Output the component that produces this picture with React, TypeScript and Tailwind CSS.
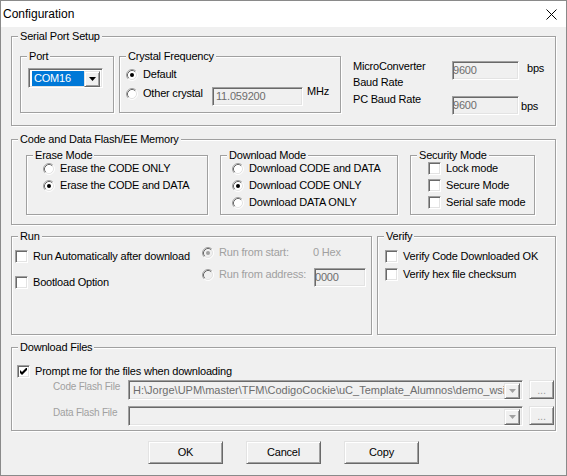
import React from "react";

const SUNKEN =
  "border border-t-[#a0a0a0] border-l-[#a0a0a0] border-b-white border-r-white shadow-[inset_1px_1px_0_#696969,inset_-1px_-1px_0_#e3e3e3]";
const RAISED =
  "border border-t-[#e3e3e3] border-l-[#e3e3e3] border-b-[#696969] border-r-[#696969] shadow-[inset_1px_1px_0_#fff,inset_-1px_-1px_0_#a0a0a0]";

function Group({
  label,
  className,
  children,
}: {
  label: string;
  className: string;
  children?: React.ReactNode;
}) {
  return (
    <div
      className={`relative border border-[#a0a0a0] shadow-[inset_1px_1px_0_#fff,1px_1px_0_#fff] ${className}`}
    >
      <span className="absolute left-[6px] -top-[7px] px-[2px] bg-[#f0f0f0] leading-[13px] whitespace-nowrap">
        {label}
      </span>
      {children}
    </div>
  );
}

function RadioIcon({ checked, disabled }: { checked?: boolean; disabled?: boolean }) {
  return (
    <svg width="12" height="12" viewBox="0 0 12 12" className="shrink-0">
      <circle cx="6" cy="6" r="5" fill={disabled ? "#f0f0f0" : "#ffffff"} />
      <path d="M9.89 2.11 A5.5 5.5 0 0 0 2.11 9.89" fill="none" stroke="#a0a0a0" />
      <path d="M2.11 9.89 A5.5 5.5 0 0 0 9.89 2.11" fill="none" stroke="#ffffff" />
      <path d="M9.18 2.82 A4.5 4.5 0 0 0 2.82 9.18" fill="none" stroke="#696969" />
      <path d="M2.82 9.18 A4.5 4.5 0 0 0 9.18 2.82" fill="none" stroke="#e3e3e3" />
      {checked && <circle cx="6" cy="6" r="2" fill={disabled ? "#a0a0a0" : "#000000"} />}
    </svg>
  );
}

function Radio({
  label,
  checked,
  disabled,
}: {
  label: string;
  checked?: boolean;
  disabled?: boolean;
}) {
  return (
    <div className="flex items-center h-[13px] whitespace-nowrap">
      <RadioIcon checked={checked} disabled={disabled} />
      <span className={disabled ? "ml-[5px] text-[#a0a0a0]" : "ml-[5px]"}>{label}</span>
    </div>
  );
}

function Check({ label, checked }: { label: string; checked?: boolean }) {
  return (
    <div className="flex items-center h-[13px] whitespace-nowrap">
      <div className={`${SUNKEN} bg-white w-[13px] h-[13px] shrink-0 flex items-center justify-center`}>
        {checked && (
          <svg width="7" height="7" viewBox="0 0 7 7">
            <polygon points="0,2 2,4 7,-1 7,2 2,7 0,5" fill="#000" />
          </svg>
        )}
      </div>
      <span className="ml-[5px]">{label}</span>
    </div>
  );
}

function Tri({ color }: { color: string }) {
  return (
    <svg width="7" height="4" viewBox="0 0 7 4">
      <polygon points="0,0 7,0 3.5,4" fill={color} />
    </svg>
  );
}

function Edit({ className, text }: { className: string; text: string }) {
  return (
    <div
      className={`${SUNKEN} bg-[#f0f0f0] flex items-center text-[#6d6d6d] whitespace-nowrap overflow-hidden ${className}`}
    >
      {text}
    </div>
  );
}

function FileRow({ label, text }: { label: string; text: string }) {
  return (
    <div className="flex items-start pl-[41px]">
      <span className="w-[75px] text-[10px] text-[#a0a0a0] whitespace-nowrap">{label}</span>
      <div className={`${SUNKEN} bg-[#f0f0f0] w-[395px] h-[20px] p-[2px] flex`}>
        <div className="flex-1 pl-[2px] text-[#6d6d6d] tracking-normal whitespace-nowrap overflow-hidden flex items-center">
          {text}
        </div>
        <div className={`${RAISED} w-[16px] h-[16px] bg-[#f0f0f0] flex items-center justify-center`}>
          <Tri color="#a0a0a0" />
        </div>
      </div>
      <div
        className={`${RAISED} ml-[6px] w-[25px] h-[19px] bg-[#f0f0f0] flex items-end justify-center pb-[3px] text-[#a0a0a0] leading-[10px]`}
      >
        ...
      </div>
    </div>
  );
}

function Button({ label }: { label: string }) {
  return (
    <div
      className={`${RAISED} w-[75px] h-[23px] bg-[#f0f0f0] flex items-center justify-center`}
    >
      {label}
    </div>
  );
}

export default function App() {
  return (
    <div className="w-[567px] h-[476px] bg-[#f0f0f0] border border-[#8a8a8a] flex flex-col text-[11px] leading-[13px] tracking-[-0.2px] text-black font-['Liberation_Sans',Arial,sans-serif]">
      {/* Title bar */}
      <div className="h-[26px] bg-white flex items-center justify-between pl-[2px] pr-[9px] shrink-0">
        <span className="text-[12px] leading-[16px] tracking-normal">Configuration</span>
        <svg width="11" height="11" viewBox="0 0 11 11">
          <path d="M0.5 0.5 L10.5 10.5 M10.5 0.5 L0.5 10.5" stroke="#000" strokeWidth="1" />
        </svg>
      </div>

      <div className="flex flex-col px-[10px]">
        {/* Serial Port Setup */}
        <Group
          label="Serial Port Setup"
          className="mt-[9px] h-[90px] flex items-start pl-[8px] pt-[19px]"
        >
          <Group label="Port" className="w-[94px] h-[57px] pl-[7px] pt-[11px]">
            <div className={`${SUNKEN} w-[75px] h-[20px] bg-white flex p-[2px]`}>
              <div className="ml-[1px] w-[54px] h-[15px] bg-[#0078d7] text-white pl-[2px] flex items-center">
                COM16
              </div>
              <div className={`${RAISED} w-[16px] h-[16px] bg-[#f0f0f0] flex items-center justify-center`}>
                <Tri color="#000" />
              </div>
            </div>
          </Group>

          <Group label="Crystal Frequency" className="ml-[5px] w-[222px] h-[57px] pl-[6px] pt-[11px]">
            <Radio label="Default" checked />
            <div className="flex items-start mt-[6px]">
              <div className="w-[86px]">
                <Radio label="Other crystal" />
              </div>
              <Edit className="w-[91px] h-[19px] pl-[3px]" text="11.059200" />
              <span className="ml-[4px] -mt-[2px]">MHz</span>
            </div>
          </Group>

          <div className="ml-[12px] flex items-start">
            <div className="w-[99px] flex flex-col pt-[4px] whitespace-nowrap">
              <span>MicroConverter</span>
              <span className="mt-[3px]">Baud Rate</span>
              <span className="mt-[4px]">PC Baud Rate</span>
            </div>
            <div className="flex flex-col">
              <div className="flex items-start mt-[5px]">
                <Edit className="w-[67px] h-[19px] pl-0" text="9600" />
                <span className="ml-[8px] mt-[1px]">bps</span>
              </div>
              <div className="flex items-start mt-[16px]">
                <Edit className="w-[67px] h-[19px] pl-0" text="9600" />
                <span className="ml-[2px] mt-[4px]">bps</span>
              </div>
            </div>
          </div>
        </Group>

        {/* Code and Data Flash/EE Memory */}
        <Group
          label="Code and Data Flash/EE Memory"
          className="mt-[13px] h-[86px] flex items-start pl-[14px] pt-[15px]"
        >
          <Group label="Erase Mode" className="w-[182px] h-[60px] pl-[16px] pt-[4px]">
            <div className="h-[17px] flex items-center">
              <Radio label="Erase the CODE ONLY" />
            </div>
            <div className="h-[17px] flex items-center">
              <Radio label="Erase the CODE and DATA" checked />
            </div>
          </Group>
          <Group label="Download Mode" className="ml-[12px] w-[178px] h-[60px] pl-[11px] pt-[4px]">
            <div className="h-[17px] flex items-center">
              <Radio label="Download CODE and DATA" />
            </div>
            <div className="h-[17px] flex items-center">
              <Radio label="Download CODE ONLY" checked />
            </div>
            <div className="h-[17px] flex items-center">
              <Radio label="Download DATA ONLY" />
            </div>
          </Group>
          <Group label="Security Mode" className="ml-[12px] w-[125px] h-[60px] pl-[17px] pt-[4px]">
            <div className="h-[17px] flex items-center">
              <Check label="Lock mode" />
            </div>
            <div className="h-[17px] flex items-center">
              <Check label="Secure Mode" />
            </div>
            <div className="h-[17px] flex items-center">
              <Check label="Serial safe mode" />
            </div>
          </Group>
        </Group>

        {/* Run + Verify */}
        <div className="mt-[11px] flex">
          <Group label="Run" className="w-[361px] h-[99px] flex items-start pl-[3px]">
            <div className="w-[187px] flex flex-col pt-[13px] gap-[13px]">
              <Check label="Run Automatically after download" />
              <Check label="Bootload Option" />
            </div>
            <div className="flex flex-col pt-[9px]">
              <div className="flex items-center">
                <div className="w-[111px]">
                  <Radio label="Run from start:" checked disabled />
                </div>
                <span className="text-[#a0a0a0]">0 Hex</span>
              </div>
              <div className="flex items-start mt-[9px]">
                <div className="w-[112px]">
                  <Radio label="Run from address:" disabled />
                </div>
                <Edit className="w-[52px] h-[19px] pl-0" text="0000" />
              </div>
            </div>
          </Group>
          <Group label="Verify" className="ml-[5px] w-[179px] h-[99px] pl-[7px] pt-[13px] flex flex-col gap-[5px]">
            <Check label="Verify Code Downloaded OK" />
            <Check label="Verify hex file checksum" />
          </Group>
        </div>

        {/* Download Files */}
        <Group label="Download Files" className="mt-[12px] h-[84px] pt-[17px] flex flex-col">
          <div className="pl-[5px]">
            <Check label="Prompt me for the files when downloading" checked />
          </div>
          <div className="mt-[2px]">
            <FileRow
              label="Code Flash File"
              text={"H:\\Jorge\\UPM\\master\\TFM\\CodigoCockie\\uC_Template_Alumnos\\demo_wsi.hex"}
            />
          </div>
          <div className="mt-[6px]">
            <FileRow label="Data Flash File" text="" />
          </div>
        </Group>

        {/* Buttons */}
        <div className="mt-[10px] flex justify-center gap-[23px]">
          <Button label="OK" />
          <Button label="Cancel" />
          <Button label="Copy" />
        </div>
      </div>
    </div>
  );
}
